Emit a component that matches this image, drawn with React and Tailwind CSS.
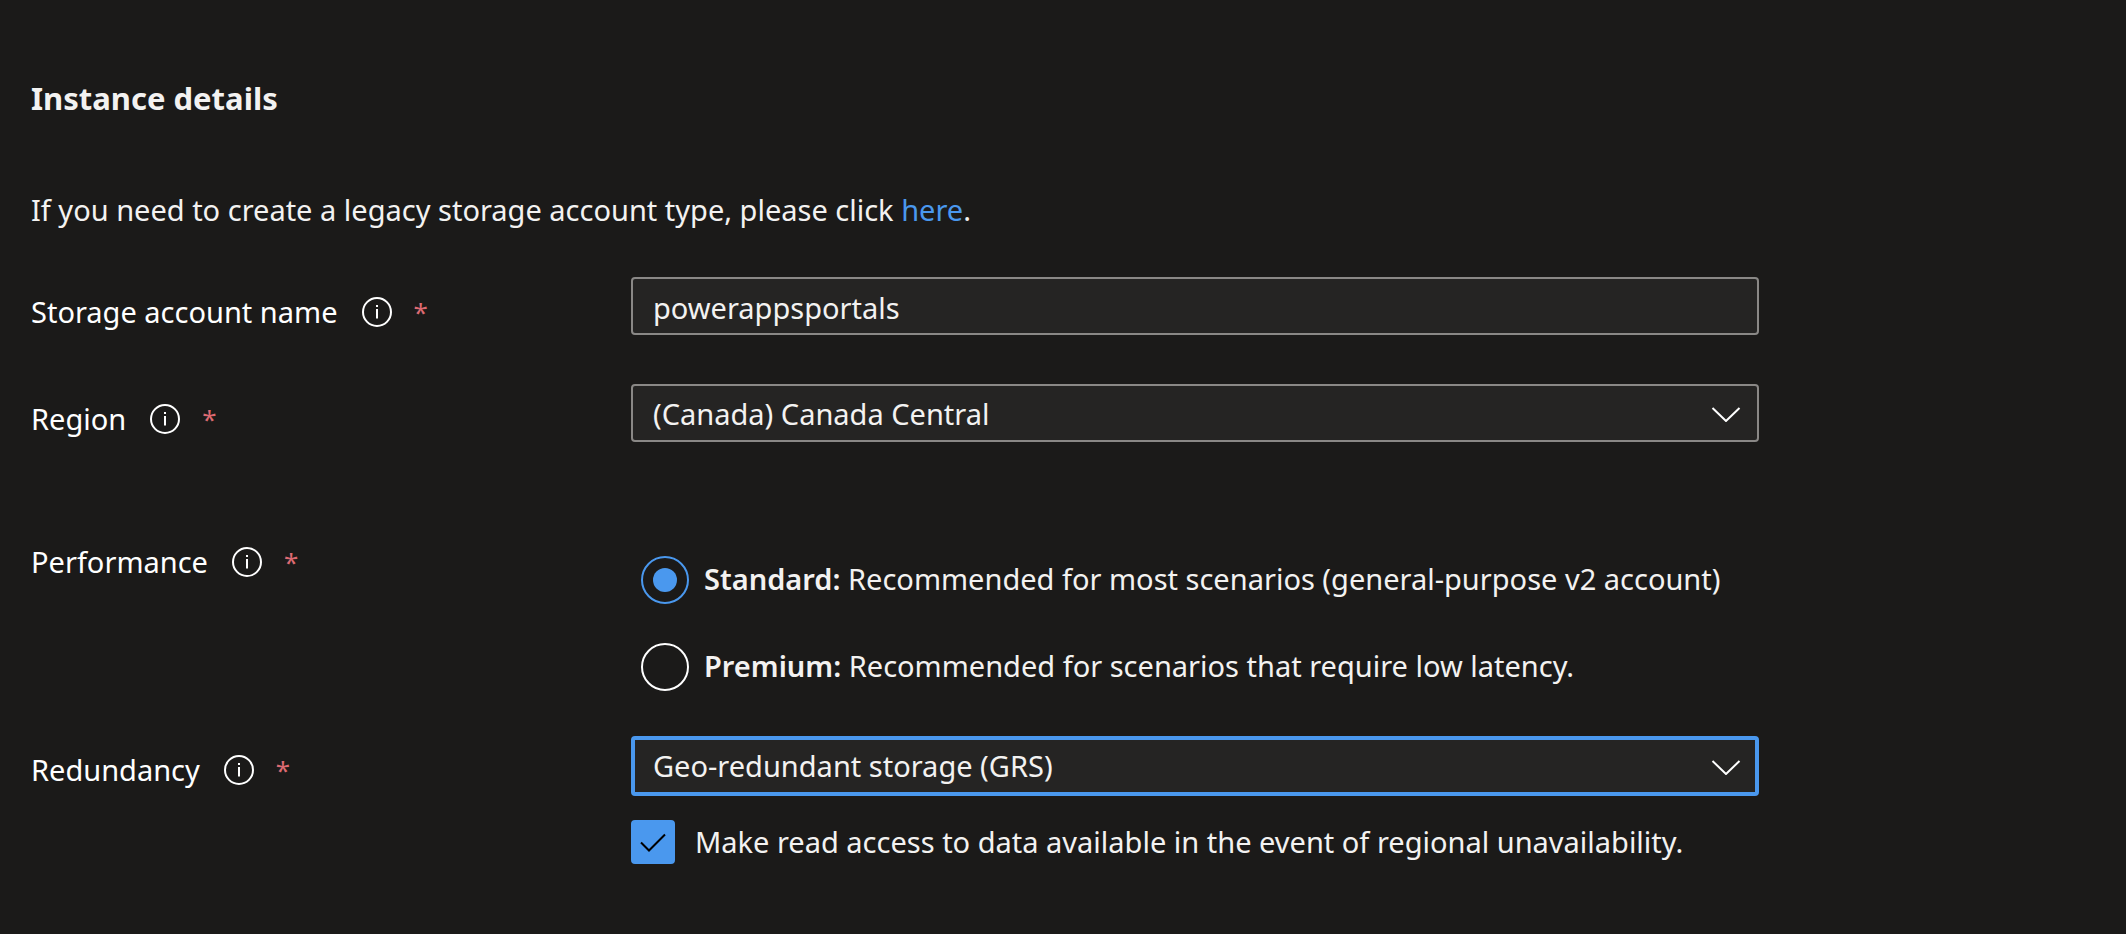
import { useState } from "react";

function InfoIcon() {
  return (
    <svg viewBox="0 0 30 30" className="size-[30px]" fill="none" aria-hidden="true">
      <circle cx="15" cy="15" r="14" stroke="currentColor" strokeWidth="2" />
      <path d="M15 12v9.500" stroke="currentColor" strokeWidth="2" />
      <path d="M15 8v2" stroke="currentColor" strokeWidth="2" />
    </svg>
  );
}

function Chevron() {
  return (
    <svg
      viewBox="0 0 30 18"
      className="pointer-events-none absolute inset-y-0 right-[18px] my-auto h-[18px] w-[30px] text-white"
      fill="none"
      aria-hidden="true"
    >
      <path d="M1.500 4L15 17L28.500 4" stroke="currentColor" strokeWidth="2" />
    </svg>
  );
}

function FieldLabel({ htmlFor, id, children }) {
  return (
    <div className="flex items-center pt-3 leading-11 text-white">
      {htmlFor ? (
        <label htmlFor={htmlFor}>{children}</label>
      ) : (
        <span id={id}>{children}</span>
      )}
      <button type="button" aria-label={`About ${children}`} className="ml-6">
        <InfoIcon />
      </button>
      <span className="ml-[22px] text-[26px] text-[#dd6a72]">*</span>
    </div>
  );
}

function Dropdown({ id, options, focused }) {
  return (
    <div className="relative">
      <select
        id={id}
        className={
          focused
            ? "block h-[60px] w-full appearance-none rounded-sm border-4 border-[#4a98ee] bg-[#252423] px-[18px] outline-none"
            : "block h-[58px] w-full appearance-none rounded-sm border-2 border-[#8a8886] bg-[#252423] px-5 pt-[2px] outline-none"
        }
      >
        {options.map((option) => (
          <option key={option}>{option}</option>
        ))}
      </select>
      <Chevron />
    </div>
  );
}

function RadioOption({ value, title, description, selected, onSelect }) {
  return (
    <label className="flex items-center gap-[15px]">
      <input
        type="radio"
        name="performance"
        value={value}
        checked={selected === value}
        onChange={() => onSelect(value)}
        className="grid size-12 shrink-0 appearance-none place-items-center rounded-full border-2 border-white before:size-6 before:rounded-full checked:border-[#4a98ee] checked:before:bg-[#4a98ee]"
      />
      <span className="pb-[2px]">
        <b className="font-semibold">{title}</b> {description}
      </span>
    </label>
  );
}

export default function App() {
  const [name, setName] = useState("powerappsportals");
  const [performance, setPerformance] = useState("standard");
  const [readAccess, setReadAccess] = useState(true);

  return (
    <main className="min-h-screen bg-[#1b1a19] px-[31px] pt-[76px] pb-16 font-['Noto_Sans','Open_Sans',sans-serif] text-[29px] leading-11 text-[#f3f2f1]">
      <h1 className="text-[31px] leading-11 font-bold">Instance details</h1>
      <p className="mt-[68px]">
        If you need to create a legacy storage account type, please click{" "}
        <a href="#legacy" className="text-[#4a98ee]">
          here
        </a>
        .
      </p>

      <form className="mt-[45px] grid max-w-[1728px] grid-cols-[600px_1fr]">
        <FieldLabel htmlFor="account-name">Storage account name</FieldLabel>
        <div>
          <input
            id="account-name"
            type="text"
            value={name}
            onChange={(event) => setName(event.target.value)}
            className="block h-[58px] w-full rounded-sm border-2 border-[#8a8886] bg-[#252423] px-5 pt-[2px] outline-none"
          />
        </div>

        <div className="col-span-2 h-[49px]" />

        <FieldLabel htmlFor="region">Region</FieldLabel>
        <Dropdown id="region" options={["(Canada) Canada Central", "(Canada) Canada East"]} />

        <div className="col-span-2 h-[86px]" />

        <div className="self-start">
          <FieldLabel id="performance-label">Performance</FieldLabel>
        </div>
        <div
          role="radiogroup"
          aria-labelledby="performance-label"
          className="flex flex-col gap-[39px] pt-7 pl-[10px]"
        >
          <RadioOption
            value="standard"
            title="Standard:"
            description="Recommended for most scenarios (general-purpose v2 account)"
            selected={performance}
            onSelect={setPerformance}
          />
          <RadioOption
            value="premium"
            title="Premium:"
            description="Recommended for scenarios that require low latency."
            selected={performance}
            onSelect={setPerformance}
          />
        </div>

        <div className="col-span-2 h-[45px]" />

        <div className="self-start">
          <FieldLabel htmlFor="redundancy">Redundancy</FieldLabel>
        </div>
        <div>
          <Dropdown
            id="redundancy"
            focused
            options={["Geo-redundant storage (GRS)", "Locally-redundant storage (LRS)"]}
          />
          <label className="mt-6 flex items-center gap-5">
            <span className="relative size-11 shrink-0">
              <input
                type="checkbox"
                checked={readAccess}
                onChange={(event) => setReadAccess(event.target.checked)}
                className="peer block size-11 appearance-none rounded-sm border-2 border-white checked:border-[#4a98ee] checked:bg-[#4a98ee]"
              />
              <svg
                viewBox="0 0 44 44"
                className="pointer-events-none absolute inset-0 hidden size-11 text-black peer-checked:block"
                fill="none"
                aria-hidden="true"
              >
                <path d="M10 22.500L18 30.500L34 14.500" stroke="currentColor" strokeWidth="2" />
              </svg>
            </span>
            <span>Make read access to data available in the event of regional unavailability.</span>
          </label>
        </div>
      </form>
    </main>
  );
}
